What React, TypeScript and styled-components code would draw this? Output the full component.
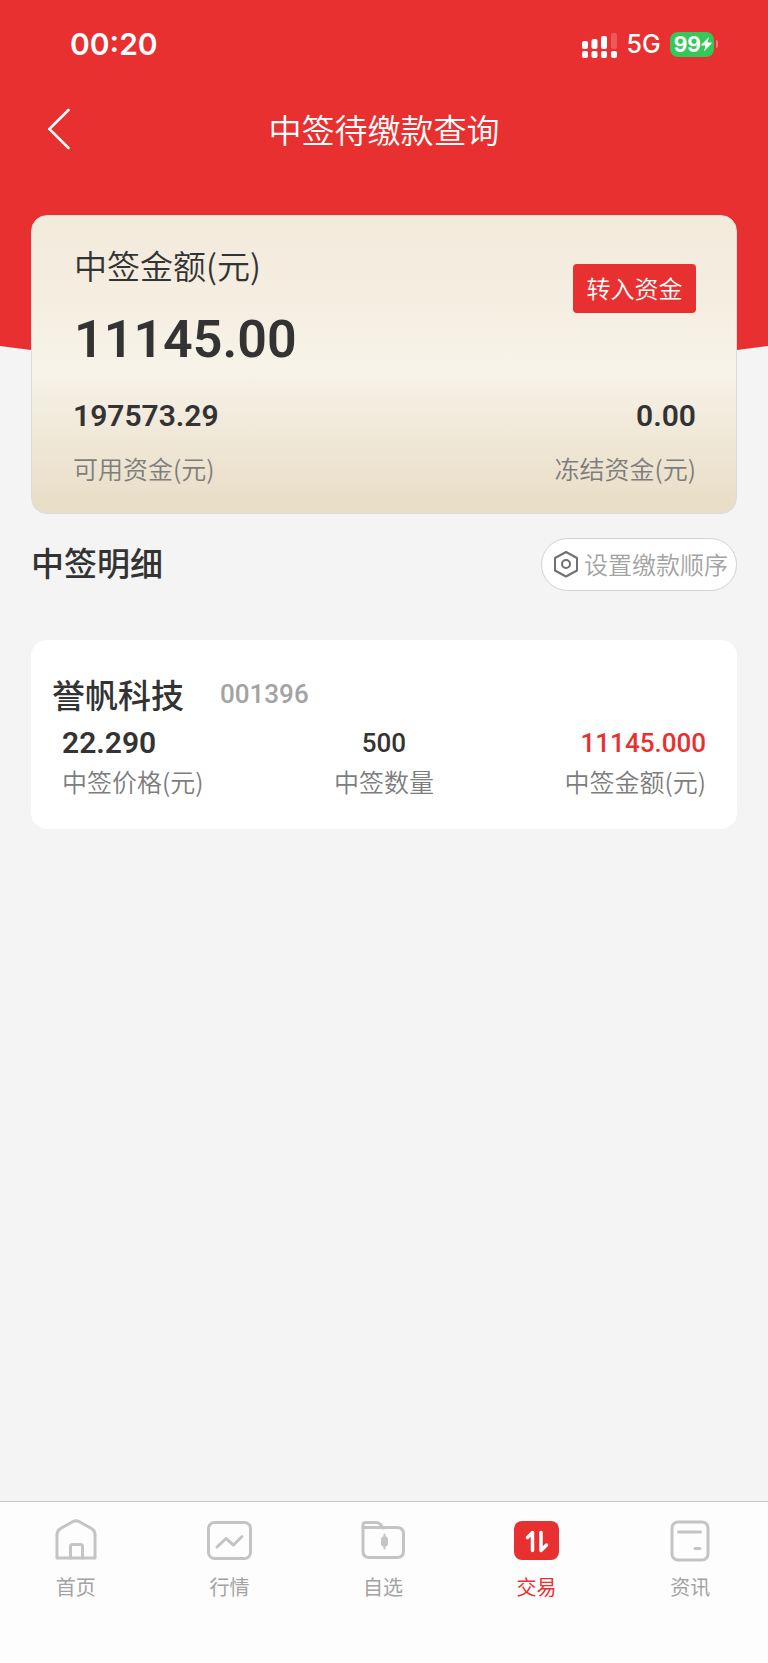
import React from 'react';
import styled, { createGlobalStyle } from 'styled-components';

const color = {
  red: '#e93030',
  page: '#f4f4f4',
  ink: '#333333',
  label: '#7d7d7d',
  muted: '#a3a3a3',
  icon: '#c4c4c4',
};

const GlobalStyle = createGlobalStyle`
  *, *::before, *::after { box-sizing: border-box; }
  body {
    margin: 0;
    background: ${color.page};
    color: ${color.ink};
    font-family: "Noto Sans CJK SC", sans-serif;
  }
  button { font-family: inherit; border: 0; margin: 0; cursor: pointer; }
  h1, h2, h3, p, dl, dt, dd { margin: 0; font-weight: 400; }
`;

const Page = styled.div`
  min-height: 100vh;
  display: flex;
  flex-direction: column;
`;

const Header = styled.header`
  background: ${color.red};
  color: #fff;
  padding-bottom: 222px;
  clip-path: polygon(0 0, 100% 0, 100% 346px, 50% 396px, 0 346px);
`;

const StatusBar = styled.div`
  height: 88px;
  padding: 0 50px 0 70px;
  display: flex;
  align-items: center;
  justify-content: space-between;
  font-family: Inter, sans-serif;
`;

const Time = styled.span`
  font-size: 30px;
  font-weight: 600;
  line-height: 36px;
`;

const Indicators = styled.div`
  display: flex;
  align-items: center;
  gap: 9px;
`;

const Network = styled.span`
  font-size: 25px;
  line-height: 30px;
  font-weight: 500;
`;

const BatteryBox = styled.span`
  display: flex;
  align-items: center;
  gap: 2px;
`;

const Battery = styled.span`
  height: 25px;
  padding: 0 2px 0 4px;
  border-radius: 8px;
  background: #34c759;
  display: flex;
  align-items: center;
  font-size: 21px;
  font-weight: 700;
  line-height: 25px;
`;

const BatteryTip = styled.span`
  width: 2px;
  height: 8px;
  border-radius: 0 2px 2px 0;
  background: #f07a7a;
`;

const TitleBar = styled.div`
  height: 82px;
  padding: 0 40px;
  display: grid;
  grid-template-columns: 40px 1fr 40px;
  align-items: center;
`;

const BackButton = styled.button`
  width: 40px;
  height: 48px;
  padding: 0 8px;
  background: none;
  color: inherit;
  display: flex;
  align-items: center;
`;

const Title = styled.h1`
  text-align: center;
  font-size: 33px;
  line-height: 48px;
  font-weight: 350;
`;

const Main = styled.main`
  position: relative;
  z-index: 1;
  margin-top: -177px;
  padding: 0 31px;
`;

const SummaryCard = styled.section`
  padding: 25px 40px 27px 41px;
  border: 1px solid #dcdcdc;
  border-radius: 16px;
  background: linear-gradient(180deg, #f2ebdb 0%, #f4ecdf 18%, #f5f0e3 35%, #f7f3e8 52%, #f3ecdf 65%, #eee5d3 80%, #e8ddc6 100%);
`;

const SummaryTop = styled.div`
  display: flex;
  justify-content: space-between;
  align-items: flex-start;
`;

const SummaryTitle = styled.h2`
  padding-left: 1px;
  font-size: 33px;
  line-height: 48px;
  font-weight: 350;
`;

const Total = styled.p`
  font-family: Roboto, sans-serif;
  font-size: 52px;
  line-height: 64px;
  font-weight: 600;
  padding: 19px 0 26px 1px;
`;

const TransferButton = styled.button`
  width: 123px;
  height: 49px;
  margin-top: 23px;
  padding: 0 0 2px;
  border-radius: 4px;
  background: ${color.red};
  color: #fff;
  font-size: 24px;
  line-height: 36px;
  font-weight: 350;
`;

const Stats = styled.dl`
  display: flex;
  justify-content: space-between;
`;

const Stat = styled.div<{ $align?: string }>`
  display: flex;
  flex-direction: column-reverse;
  text-align: ${(p) => p.$align ?? 'left'};
`;

const StatLabel = styled.dt<{ $tight?: boolean }>`
  margin-top: ${(p) => (p.$tight ? '2px' : '16px')};
  color: ${color.label};
  font-size: 25px;
  line-height: 36px;
  font-weight: 350;
`;

const StatValue = styled.dd<{ $small?: boolean; $tone?: string }>`
  color: ${(p) => p.$tone ?? color.ink};
  font-family: Roboto, sans-serif;
  font-size: ${(p) => (p.$small ? '26px' : '30px')};
  line-height: 36px;
  font-weight: ${(p) => (p.$small ? 500 : 600)};
`;

const SectionHead = styled.div`
  margin-top: 24px;
  display: flex;
  align-items: center;
  justify-content: space-between;
`;

const SectionTitle = styled.h2`
  padding-bottom: 5px;
  font-size: 33px;
  line-height: 48px;
  font-weight: 500;
`;

const OrderButton = styled.button`
  height: 53px;
  padding: 0 8px 1px 11px;
  border: 1px solid #d2d2d2;
  border-radius: 27px;
  background: #fff;
  color: ${color.muted};
  display: flex;
  align-items: center;
  gap: 5px;
  font-size: 24px;
  line-height: 36px;
  font-weight: 350;
`;

const StockCard = styled.article`
  margin-top: 49px;
  padding: 30px 31px;
  border-radius: 16px;
  background: #fff;
`;

const StockHead = styled.div`
  margin-left: -10px;
  display: flex;
  align-items: center;
  gap: 36px;
`;

const StockName = styled.h3`
  font-size: 33px;
  line-height: 48px;
  font-weight: 500;
`;

const StockCode = styled.span`
  color: ${color.muted};
  font-family: Roboto, sans-serif;
  font-size: 26px;
  line-height: 36px;
  font-weight: 500;
`;

const StockStats = styled.dl`
  margin-top: 7px;
  display: grid;
  grid-template-columns: 1fr 1fr 1fr;
`;

const TabBar = styled.nav`
  margin-top: auto;
  height: 162px;
  padding-top: 14px;
  border-top: 1px solid #c6c6c6;
  background: #fdfdfd;
  display: flex;
  align-items: flex-start;
`;

const Tab = styled.a<{ $active?: boolean }>`
  flex: 1;
  padding-right: 2px;
  display: flex;
  flex-direction: column;
  align-items: center;
  gap: 8px;
  color: ${(p) => (p.$active ? color.red : color.muted)};
  font-size: 20px;
  line-height: 30px;
  text-decoration: none;
`;

const TabIcon = styled.svg`
  width: 48px;
  height: 48px;
  fill: none;
  stroke: ${color.icon};
  stroke-width: 3;
  stroke-linecap: round;
  stroke-linejoin: round;
`;

const tabs = [
  {
    name: '首页',
    icon: (
      <>
        <path d="M5 42V19c0-3 1-5 3.500-6.500L21.500 5.300q2.500-1.300 5 0l13 7.200C42 14 43 16 43 19v23z" />
        <path d="M18.500 42V30.500a2 2 0 0 1 2-2h8a2 2 0 0 1 2 2V42" />
      </>
    ),
  },
  {
    name: '行情',
    icon: (
      <>
        <rect x="3.500" y="6.500" width="42" height="36" rx="6" />
        <path d="M12 31L21 22.500l7.500 6.500L37 20.500" />
      </>
    ),
  },
  {
    name: '自选',
    icon: (
      <>
        <path d="M4 12V9q0-2.500 3-2.500h10q3 0 5 2.500L24 12" />
        <path d="M4 11.500H38q6.500 0 6.500 6.500V35q0 6.500-6.500 6.500H10.500q-6.500 0-6.500-6.500z" />
        <path d="M25.500 18.500v14" strokeWidth="2" />
        <path d="M23.500 20.500h4l1.500 2v6l-1.500 2h-4l-1.500-2v-6z" fill={color.icon} stroke="none" />
      </>
    ),
  },
  {
    name: '交易',
    active: true,
    icon: (
      <>
        <rect x="1" y="5" width="45" height="39" rx="8" fill={color.red} stroke="none" />
        <path d="M14.500 21.500l5-5V34.500M28 16.500v18l5.500-5.500" stroke="#fff" strokeWidth="3.500" />
      </>
    ),
  },
  {
    name: '资讯',
    icon: (
      <>
        <rect x="6" y="6" width="36" height="38" rx="6" />
        <path d="M12.500 16h22M29 32.500h5" />
      </>
    ),
  },
];

export default function App() {
  return (
    <Page>
      <GlobalStyle />
      <Header>
        <StatusBar>
          <Time>00:20</Time>
          <Indicators>
            <svg width="36" height="28" viewBox="0 0 36 28" fill="#fff" aria-hidden="true">
              <rect x="0" y="11" width="6" height="8" rx="2" />
              <rect x="9.500" y="9" width="6" height="10" rx="2" />
              <rect x="19" y="6" width="6" height="13" rx="2" />
              <rect x="29" y="3" width="6" height="16" rx="2" opacity="0.2" />
              <rect x="0" y="21" width="6" height="7" rx="2" />
              <rect x="9.500" y="21" width="6" height="7" rx="2" />
              <rect x="19" y="21" width="6" height="7" rx="2" />
              <rect x="29" y="21" width="6" height="7" rx="2" />
            </svg>
            <Network>5G</Network>
            <BatteryBox>
              <Battery>
                99
                <svg width="11" height="20" viewBox="0 0 11 20" fill="#fff" aria-hidden="true">
                  <path d="M8 3L0.500 10.500Q0 11.500 1 11.500H4.500L3 17.500L10.500 9.500Q11 8.500 10 8.500H6.500z" />
                </svg>
              </Battery>
              <BatteryTip />
            </BatteryBox>
          </Indicators>
        </StatusBar>
        <TitleBar>
          <BackButton aria-label="返回">
            <svg width="22" height="42" viewBox="0 0 22 42" fill="none" stroke="currentColor" strokeWidth="2.500" strokeLinecap="round">
              <path d="M20.500 2L1.300 21l19.200 19" />
            </svg>
          </BackButton>
          <Title>中签待缴款查询</Title>
        </TitleBar>
      </Header>

      <Main>
        <SummaryCard>
          <SummaryTop>
            <div>
              <SummaryTitle>中签金额(元)</SummaryTitle>
              <Total>11145.00</Total>
            </div>
            <TransferButton>转入资金</TransferButton>
          </SummaryTop>
          <Stats>
            <Stat>
              <StatLabel>可用资金(元)</StatLabel>
              <StatValue>197573.29</StatValue>
            </Stat>
            <Stat $align="right">
              <StatLabel>冻结资金(元)</StatLabel>
              <StatValue>0.00</StatValue>
            </Stat>
          </Stats>
        </SummaryCard>

        <SectionHead>
          <SectionTitle>中签明细</SectionTitle>
          <OrderButton>
            <svg width="26" height="28" viewBox="0 0 26 28" fill="none" stroke="#707070" strokeWidth="2" strokeLinejoin="round" aria-hidden="true">
              <path d="M13 2L24 8V20.500L13 26.500L2 20.500V8z" />
              <circle cx="13" cy="14" r="4" />
            </svg>
            设置缴款顺序
          </OrderButton>
        </SectionHead>

        <StockCard>
          <StockHead>
            <StockName>誉帆科技</StockName>
            <StockCode>001396</StockCode>
          </StockHead>
          <StockStats>
            <Stat>
              <StatLabel $tight>中签价格(元)</StatLabel>
              <StatValue>22.290</StatValue>
            </Stat>
            <Stat $align="center">
              <StatLabel $tight>中签数量</StatLabel>
              <StatValue $small>500</StatValue>
            </Stat>
            <Stat $align="right">
              <StatLabel $tight>中签金额(元)</StatLabel>
              <StatValue $small $tone={color.red}>11145.000</StatValue>
            </Stat>
          </StockStats>
        </StockCard>
      </Main>

      <TabBar>
        {tabs.map((tab) => (
          <Tab key={tab.name} href="#" $active={tab.active} aria-current={tab.active ? 'page' : undefined}>
            <TabIcon viewBox="0 0 48 48" aria-hidden="true">{tab.icon}</TabIcon>
            {tab.name}
          </Tab>
        ))}
      </TabBar>
    </Page>
  );
}
